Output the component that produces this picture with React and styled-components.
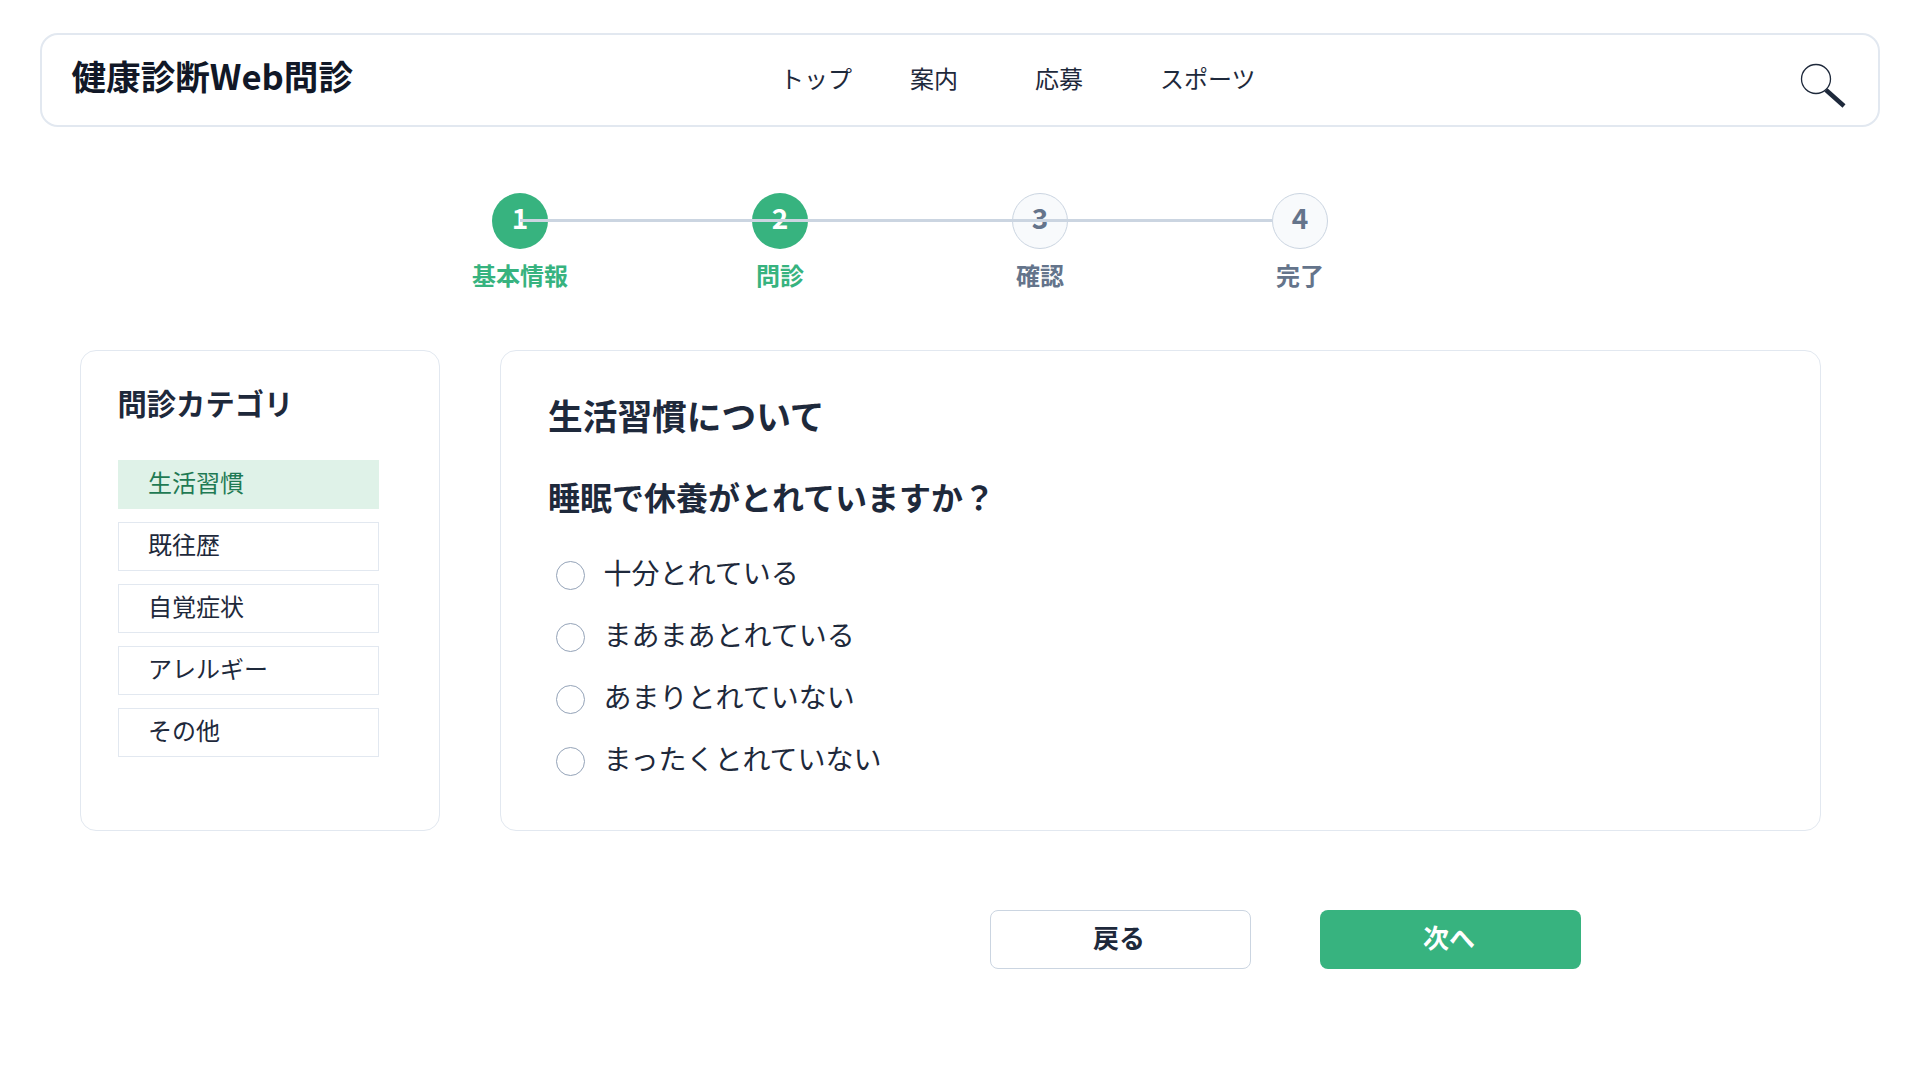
import React from "react";
import styled, { createGlobalStyle } from "styled-components";

const GlobalStyle = createGlobalStyle`
  html, body {
    margin: 0;
    padding: 0;
    background: #ffffff;
  }
  body {
    font-family: "Noto Sans CJK JP", "Noto Sans", sans-serif;
    color: #1e293b;
  }
  * {
    box-sizing: border-box;
  }
`;

const Page = styled.div`
  width: 1920px;
  height: 1080px;
  padding: 33px 40px 0;
  display: flex;
  flex-direction: column;
  overflow: hidden;
`;

const Header = styled.header`
  height: 94px;
  border: 2px solid #e2e8f0;
  border-radius: 18px;
  display: flex;
  align-items: center;
  padding: 0 32px 0 29.5px;
  flex-shrink: 0;
`;

const Logo = styled.div`
  width: 708.5px;
  font-size: 34.6px;
  font-weight: 700;
  line-height: 1;
  color: #111827;
  margin-top: -10px;
`;

const Nav = styled.nav`
  display: flex;
  align-items: center;
  flex: 1;
  font-size: 24px;
  color: #1e293b;
  margin-top: -5px;
`;

const NavItem = styled.span`
  margin-left: ${(p) => p.$gap || 0}px;
`;

const SearchIcon = styled.svg`
  width: 50px;
  height: 50px;
  margin-right: -1px;
  margin-top: 11px;
`;

const Stepper = styled.div`
  width: 1040px;
  margin: 65.5px 0 0 350px;
  display: flex;
  position: relative;
  flex-shrink: 0;
`;

const StepLine = styled.div`
  position: absolute;
  left: 130px;
  right: 158px;
  top: 26px;
  height: 3.5px;
  background: #cbd5e1;
  z-index: 2;
`;

const Step = styled.div`
  width: 260px;
  display: flex;
  flex-direction: column;
  align-items: center;
`;

const Circle = styled.div`
  width: 56px;
  height: 56px;
  border-radius: 50%;
  display: flex;
  align-items: center;
  justify-content: center;
  padding-bottom: 7px;
  font-size: 28px;
  font-weight: 700;
  line-height: 1;
  background: ${(p) => (p.$done ? "#37b37f" : "#f8fafc")};
  border: ${(p) => (p.$done ? "none" : "1px solid #cbd5e1")};
  color: ${(p) => (p.$done ? "#ffffff" : "#64748b")};
`;

const StepLabel = styled.div`
  margin-top: 8.5px;
  font-size: 24px;
  font-weight: 700;
  line-height: 36px;
  color: ${(p) => (p.$done ? "#37b37f" : "#64748b")};
`;

const Content = styled.div`
  display: flex;
  gap: 60px;
  margin: 57px 59px 0 40px;
  height: 481px;
  flex-shrink: 0;
`;

const Side = styled.aside`
  width: 360px;
  border: 1.5px solid #e2e8f0;
  border-radius: 16px;
  padding: 30px 36.5px 0;
`;

const SideTitle = styled.h2`
  margin: 0 0 37px;
  font-size: 29.3px;
  font-weight: 700;
  line-height: 42px;
  color: #1e293b;
`;

const SideList = styled.div`
  display: flex;
  flex-direction: column;
  gap: 13px;
`;

const SideItem = styled.div`
  width: 261px;
  height: 49px;
  padding: 0 0 6px 29.5px;
  display: flex;
  align-items: center;
  font-size: 24px;
  border: 1.5px solid ${(p) => (p.$active ? "#dff2e8" : "#e2e8f0")};
  background: ${(p) => (p.$active ? "#dff2e8" : "#ffffff")};
  color: ${(p) => (p.$active ? "#1f7a54" : "#1e293b")};
`;

const Card = styled.section`
  flex: 1;
  border: 1.5px solid #e2e8f0;
  border-radius: 16px;
  padding: 38.5px 47px 0;
`;

const CardTitle = styled.h1`
  margin: 0 0 32.5px;
  font-size: 34.7px;
  font-weight: 700;
  line-height: 50px;
  color: #1e293b;
`;

const Question = styled.h3`
  margin: 0 0 31px;
  font-size: 32px;
  font-weight: 700;
  line-height: 48px;
  color: #1e293b;
`;

const Options = styled.div`
  display: flex;
  flex-direction: column;
  gap: 20px;
`;

const Option = styled.label`
  height: 42px;
  display: flex;
  align-items: center;
  padding-left: 8px;
  font-size: 28px;
  color: #1e293b;
`;

const Radio = styled.span`
  width: 29px;
  height: 29px;
  border-radius: 50%;
  border: 1px solid #94a3b8;
  background: #ffffff;
  margin-right: 18.5px;
  flex-shrink: 0;
  position: relative;
  top: 3px;
`;

const Buttons = styled.div`
  display: flex;
  gap: 69px;
  margin: 79px 0 0 950px;
`;

const Button = styled.button`
  width: 261px;
  height: 59px;
  border-radius: 8px;
  padding: 0 3px 7px 0;
  font-family: inherit;
  font-size: 26px;
  font-weight: 700;
  border: ${(p) => (p.$primary ? "none" : "1.5px solid #cbd5e1")};
  background: ${(p) => (p.$primary ? "#37b37f" : "#ffffff")};
  color: ${(p) => (p.$primary ? "#ffffff" : "#1e293b")};
`;

const steps = ["基本情報", "問診", "確認", "完了"];
const categories = ["生活習慣", "既往歴", "自覚症状", "アレルギー", "その他"];
const answers = ["十分とれている", "まあまあとれている", "あまりとれていない", "まったくとれていない"];

export default function App() {
  return (
    <>
      <GlobalStyle />
      <Page>
        <Header>
          <Logo>健康診断Web問診</Logo>
          <Nav>
            <NavItem>トップ</NavItem>
            <NavItem $gap={58}>案内</NavItem>
            <NavItem $gap={77}>応募</NavItem>
            <NavItem $gap={77}>スポーツ</NavItem>
          </Nav>
          <SearchIcon viewBox="0 0 50 50">
            <circle cx="19" cy="18" r="14.5" fill="none" stroke="#1e293b" strokeWidth="1.3" />
            <line x1="29" y1="29" x2="47" y2="45" stroke="#1e293b" strokeWidth="4.5" />
          </SearchIcon>
        </Header>
        <Stepper>
          <StepLine />
          {steps.map((s, i) => (
            <Step key={s}>
              <Circle $done={i < 2}>{i + 1}</Circle>
              <StepLabel $done={i < 2}>{s}</StepLabel>
            </Step>
          ))}
        </Stepper>
        <Content>
          <Side>
            <SideTitle>問診カテゴリ</SideTitle>
            <SideList>
              {categories.map((c, i) => (
                <SideItem key={c} $active={i === 0}>{c}</SideItem>
              ))}
            </SideList>
          </Side>
          <Card>
            <CardTitle>生活習慣について</CardTitle>
            <Question>睡眠で休養がとれていますか？</Question>
            <Options>
              {answers.map((a) => (
                <Option key={a}>
                  <Radio />
                  {a}
                </Option>
              ))}
            </Options>
          </Card>
        </Content>
        <Buttons>
          <Button>戻る</Button>
          <Button $primary>次へ</Button>
        </Buttons>
      </Page>
    </>
  );
}
